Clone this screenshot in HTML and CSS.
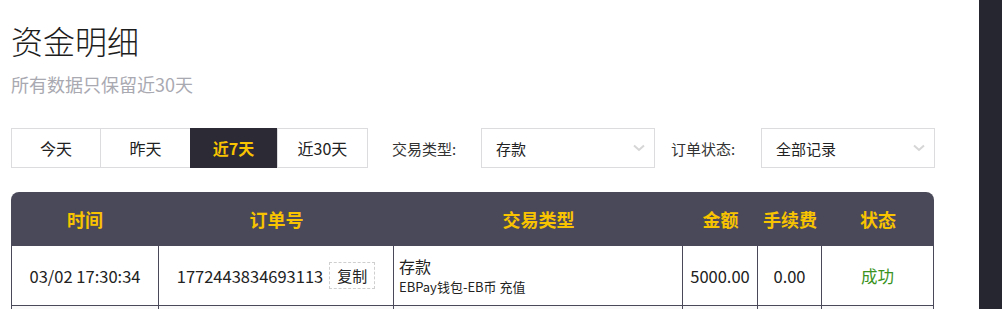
FILE: index.html
```html
<!DOCTYPE html>
<html lang="zh-CN">
<head>
<meta charset="utf-8">
<title>资金明细</title>
<link rel="stylesheet" href="styles.css">
</head>
<body>
<div class="page">
  <main class="main">
    <h1 class="title">资金明细</h1>
    <p class="subtitle">所有数据只保留近30天</p>

    <div class="filters">
      <div class="range">
        <button class="range-btn b1">今天</button>
        <button class="range-btn b2">昨天</button>
        <button class="range-btn b3 active">近7天</button>
        <button class="range-btn b4">近30天</button>
      </div>
      <label class="flabel l1">交易类型:</label>
      <div class="select">
        <span>存款</span>
        <svg class="chev" width="12" height="8" viewBox="0 0 12 8"><path d="M1 1.5 L6 6 L11 1.5" fill="none" stroke="#d6d6d6" stroke-width="2"/></svg>
      </div>
      <label class="flabel l2">订单状态:</label>
      <div class="select">
        <span>全部记录</span>
        <svg class="chev" width="12" height="8" viewBox="0 0 12 8"><path d="M1 1.5 L6 6 L11 1.5" fill="none" stroke="#d6d6d6" stroke-width="2"/></svg>
      </div>
    </div>

    <div class="table">
      <div class="thead">
        <div class="th">时间</div>
        <div class="th">订单号</div>
        <div class="th">交易类型</div>
        <div class="th">金额</div>
        <div class="th">手续费</div>
        <div class="th">状态</div>
      </div>
      <div class="tr">
        <div class="td">03/02 17:30:34</div>
        <div class="td"><span class="order">1772443834693113</span><span class="copy">复制</span></div>
        <div class="td type"><div class="type-main">存款</div><div class="type-sub">EBPay钱包-EB币 充值</div></div>
        <div class="td">5000.00</div>
        <div class="td">0.00</div>
        <div class="td ok">成功</div>
      </div>
      <div class="tr alt">
        <div class="td"></div>
        <div class="td"></div>
        <div class="td"></div>
        <div class="td"></div>
        <div class="td"></div>
        <div class="td"></div>
      </div>
    </div>
  </main>
  <aside class="side"></aside>
</div>
</body>
</html>
```

FILE: styles.css
```css
* { box-sizing: border-box; }
html, body { margin: 0; padding: 0; background: #fff; }
body {
  font-family: "Noto Sans CJK SC", "Noto Sans", sans-serif;
  color: #222;
  overflow: hidden;
}
.page { display: flex; min-height: 309px; }
.main { flex: 1; padding: 20px 0 0 11px; }
.side { width: 23px; background: #262631; flex: none; }

.title {
  margin: 0;
  font-size: 32px;
  line-height: 40px;
  font-weight: 300;
  color: #1d1d1d;
}
.subtitle {
  margin: 12px 0 0;
  font-size: 18px;
  line-height: 24px;
  color: #a9a9b1;
}

.filters {
  margin-top: 32px;
  display: flex;
  align-items: center;
  height: 40px;
}
.range {
  display: flex;
  border: 1px solid #dcdcdf;
  height: 40px;
}
.range-btn {
  border: 0;
  background: #fff;
  font-family: inherit;
  font-size: 16px;
  color: #222;
  padding: 0;
  height: 38px;
  cursor: pointer;
}
.b1 { width: 88px; }
.b2 { width: 90px; border-left: 1px solid #dcdcdf; }
.b3 { width: 87px; }
.b4 { width: 90px; border-left: 1px solid #dcdcdf; }
.range-btn.active {
  background: #2b2a35;
  color: #f8c300;
  font-weight: 700;
  height: 40px;
  margin-top: -1px;
}
.flabel { font-size: 15px; color: #333; }
.l1 { margin-left: 24px; width: 89px; }
.l2 { margin-left: 16px; width: 90px; }
.select {
  width: 174px;
  height: 40px;
  border: 1px solid #dcdcdf;
  display: flex;
  align-items: center;
  justify-content: space-between;
  padding: 0 9px 0 14px;
  font-size: 15px;
  color: #222;
}
.chev { display: block; }

.table { margin-top: 24px; width: 923px; }
.thead, .tr {
  display: grid;
  grid-template-columns: 148px 235px 289px 75px 64px 112px;
}
.thead {
  background: #4a4959;
  border-radius: 8px 8px 0 0;
  height: 54px;
}
.th {
  display: flex;
  align-items: center;
  justify-content: center;
  color: #f8c300;
  font-weight: 700;
  font-size: 18px;
}
.tr { height: 60px; background: #fff; }
.tr.alt { background: #f9f9f9; }
.td {
  border-right: 1px solid #4a4959;
  border-bottom: 1px solid #4a4959;
  display: flex;
  align-items: center;
  justify-content: center;
  font-size: 16.5px;
  color: #222;
}
.td:first-child { border-left: 1px solid #4a4959; }
.order { font-size: 16.5px; }
.copy {
  margin-left: 6px;
  border: 1px dashed #cfcfcf;
  font-size: 15px;
  line-height: 25px;
  padding: 0 7px;
}
.td.type {
  flex-direction: column;
  align-items: flex-start;
  padding-left: 5px;
}
.type-main { font-size: 16px; line-height: 22px; }
.type-sub { font-size: 13px; line-height: 19px; }
.ok { color: #3a931e; }
```
